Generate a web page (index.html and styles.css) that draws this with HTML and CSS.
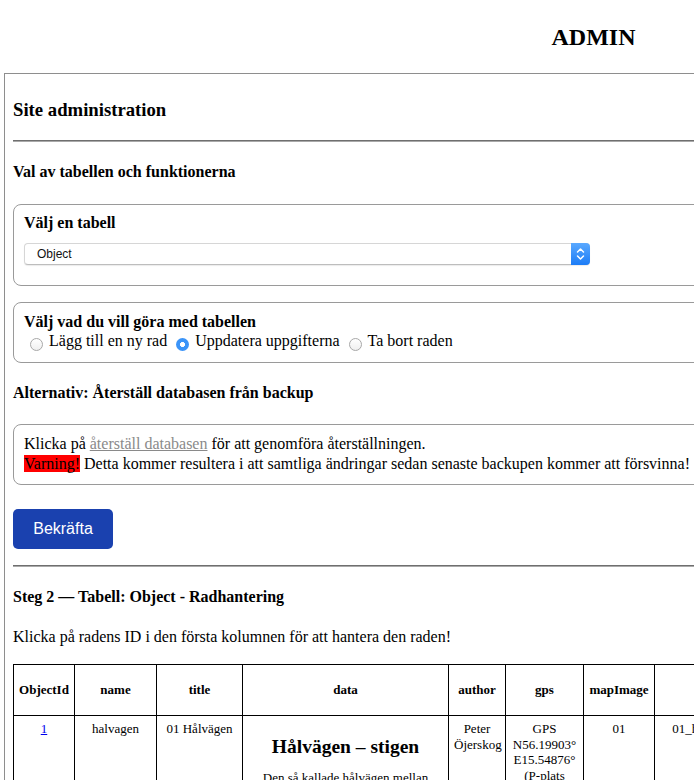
FILE: index.html
```html
<!DOCTYPE html>
<html lang="sv">
<head>
<meta charset="utf-8">
<title>Admin</title>
<link rel="stylesheet" href="styles.css">
</head>
<body>
<div class="page">
  <header class="top">
    <h1 class="brand">ADMIN</h1>
  </header>
  <main class="admin">
    <h3 class="site-title">Site administration</h3>
    <hr class="rule rule-first">
    <h4 class="section section-first">Val av tabellen och funktionerna</h4>

    <div class="panel panel-select">
      <h4 class="panel-title">Välj en tabell</h4>
      <div class="select">
        <span class="select-value">Object</span>
        <span class="stepper">
          <svg width="19" height="22" viewBox="0 0 19 22" aria-hidden="true">
            <path d="M6.5 9 L9.5 6 L12.5 9" fill="none" stroke="#fff" stroke-width="1.5" stroke-linecap="round" stroke-linejoin="round"/>
            <path d="M6.5 13 L9.5 16 L12.5 13" fill="none" stroke="#fff" stroke-width="1.5" stroke-linecap="round" stroke-linejoin="round"/>
          </svg>
        </span>
      </div>
    </div>

    <div class="panel panel-action">
      <h4 class="panel-title">Välj vad du vill göra med tabellen</h4>
      <div class="radios">
        <label class="radio"><span class="dot"></span>Lägg till en ny rad</label>
        <label class="radio"><span class="dot dot-on"></span>Uppdatera uppgifterna</label>
        <label class="radio"><span class="dot"></span>Ta bort raden</label>
      </div>
    </div>

    <h4 class="section section-alt">Alternativ: Återställ databasen från backup</h4>

    <div class="panel panel-restore">
      <p class="restore-text">Klicka på <a class="muted-link" href="#">återställ databasen</a> för att genomföra återställningen.<br><span class="warn">Varning!</span> Detta kommer resultera i att samtliga ändringar sedan senaste backupen kommer att försvinna!</p>
    </div>

    <button class="btn" type="button">Bekräfta</button>

    <hr class="rule rule-second">

    <h4 class="section section-step">Steg 2 — Tabell: Object - Radhantering</h4>
    <p class="hint">Klicka på radens ID i den första kolumnen för att hantera den raden!</p>

    <table class="grid">
      <colgroup>
        <col class="c-id">
        <col class="c-name">
        <col class="c-title">
        <col class="c-data">
        <col class="c-author">
        <col class="c-gps">
        <col class="c-map">
        <col class="c-image">
        <col class="c-extra">
      </colgroup>
      <thead>
        <tr>
          <th>ObjectId</th>
          <th>name</th>
          <th>title</th>
          <th>data</th>
          <th>author</th>
          <th>gps</th>
          <th>mapImage</th>
          <th>image</th>
          <th>sound</th>
        </tr>
      </thead>
      <tbody>
        <tr>
          <td><a class="id-link" href="#">1</a></td>
          <td>halvagen</td>
          <td>01 Hålvägen</td>
          <td>
            <h2 class="data-title">Hålvägen – stigen</h2>
            <p class="data-text">Den så kallade hålvägen mellan Hallaryd och Ryd är en gammal färdväg som har använts i flera hundra år.</p>
          </td>
          <td>Peter Öjerskog</td>
          <td>GPS N56.19903° E15.54876° (P-plats N56.20087° E15.54412°)</td>
          <td>01</td>
          <td>01_halvagen.jpg</td>
          <td>01_halvagen.mp3</td>
        </tr>
      </tbody>
    </table>
  </main>
</div>
</body>
</html>
```

FILE: styles.css
```css
html {
  overflow: hidden;
}

body {
  margin: 0;
  background: #fff;
  color: #000;
  font-family: "Liberation Serif", "Times New Roman", serif;
  font-size: 16px;
}

.page {
  width: 1187px;
}

.top {
  padding: 23px 0 22px;
  text-align: center;
}

.brand {
  margin: 0;
  font-size: 24px;
  line-height: 28px;
  font-weight: bold;
}

.admin {
  margin-left: 4px;
  border-top: 1px solid #8e8e8e;
  border-left: 1px solid #8e8e8e;
  padding: 0 0 40px 8px;
}

.site-title {
  margin: 25px 0 0;
  font-size: 18.72px;
  line-height: 22px;
  font-weight: bold;
}

.rule {
  margin: 0;
  height: 0;
  border: 0;
  border-top: 1px solid #6f6f6f;
  border-bottom: 1px solid #a9a9a9;
}

.rule-first {
  margin-top: 19px;
}

.rule-second {
  margin-top: 16px;
}

.section {
  margin: 20px 0 0;
  font-size: 16px;
  line-height: 20px;
  font-weight: bold;
}

.panel {
  border: 1px solid #9a9a9a;
  border-radius: 8px;
  padding: 0 10px;
}

.panel-select {
  margin-top: 22px;
  padding-top: 8px;
  padding-bottom: 20px;
}

.panel-select .select {
  margin-top: 10px;
}

.panel-action {
  margin-top: 16px;
  padding-top: 9px;
  padding-bottom: 13px;
}

.panel-restore {
  margin-top: 21px;
  padding-top: 9px;
  padding-bottom: 10px;
}

.panel-title {
  margin: 0;
  font-size: 16px;
  line-height: 20px;
  font-weight: bold;
}

.select {
  width: 566px;
  height: 22px;
  box-sizing: border-box;
  display: flex;
  align-items: center;
  border: 1px solid #d6d6d6;
  border-bottom-color: #bdbdbd;
  border-radius: 4px;
  background: #fff;
  box-shadow: 0 1px 1px rgba(0, 0, 0, 0.08);
}

.select-value {
  flex: 1;
  padding-left: 12px;
  font-family: "Liberation Sans", Arial, sans-serif;
  font-size: 12px;
  line-height: 20px;
  color: #111;
}

.stepper {
  width: 19px;
  height: 22px;
  margin: -1px -1px -1px 0;
  border-radius: 0 4px 4px 0;
  background: linear-gradient(#5aa9ff, #1c7cf6);
  display: flex;
}

.radios {
  display: flex;
  align-items: flex-start;
  height: 16px;
  margin-top: 1px;
}

.radio {
  display: flex;
  align-items: flex-start;
  line-height: 16px;
  font-size: 16px;
}

.radio + .radio {
  margin-left: 3px;
}

.dot {
  width: 13px;
  height: 13px;
  box-sizing: border-box;
  margin: 5px 6px 0 6px;
  border: 1px solid #a8a8a8;
  border-radius: 50%;
  background: linear-gradient(#ffffff, #efefef);
}

.dot-on {
  border: 0;
  background: radial-gradient(circle, #ffffff 0 2.2px, #3b94f8 2.8px);
}

.restore-text {
  margin: 0;
  line-height: 20px;
}

.muted-link {
  color: #8a8a8a;
  text-decoration: underline;
}

.warn {
  background: #ff0000;
}

.btn {
  display: block;
  margin-top: 24px;
  width: 100px;
  height: 40px;
  border: 0;
  border-radius: 5px;
  background: #1a41af;
  color: #fff;
  font-family: "Liberation Sans", Arial, sans-serif;
  font-size: 16px;
  padding: 0;
}

.hint {
  margin: 20px 0 0;
  line-height: 20px;
}

.grid {
  margin-top: 17px;
  border-collapse: collapse;
  table-layout: fixed;
  width: 941px;
  font-size: 13px;
}

.c-id { width: 61px; }
.c-name { width: 82px; }
.c-title { width: 86px; }
.c-data { width: 206px; }
.c-author { width: 57px; }
.c-gps { width: 78px; }
.c-map { width: 71px; }
.c-image { width: 122px; }
.c-extra { width: 178px; }

.grid th,
.grid td {
  border: 1px solid #000;
  text-align: center;
}

.grid th {
  height: 50px;
  padding: 0 5px;
  font-weight: bold;
  vertical-align: middle;
}

.grid td {
  padding: 5px;
  vertical-align: top;
  line-height: 15.5px;
}

.id-link {
  color: #0000ee;
}

.data-title {
  margin: 15px 0 12px;
  font-size: 19.5px;
  line-height: 22px;
  font-weight: bold;
}

.data-text {
  margin: 0;
}
```
